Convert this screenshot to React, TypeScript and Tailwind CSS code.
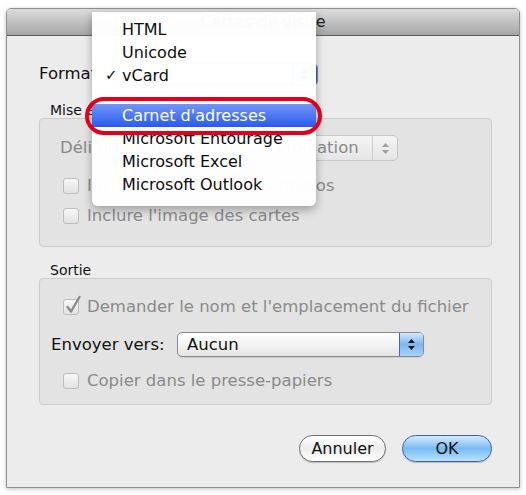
import React from "react";

function Arrows({ color = "#111" }: { color?: string }) {
  return (
    <svg width="7" height="11" viewBox="0 0 7 11" fill={color}>
      <path d="M3.5 0 L7 4 L0 4 Z" />
      <path d="M0 7 L7 7 L3.5 11 Z" />
    </svg>
  );
}

function CheckBox({ checked = false }: { checked?: boolean }) {
  return (
    <div className="relative w-[16px] h-[16px] shrink-0 rounded-[3px] border border-[#bdbdbd] bg-gradient-to-b from-[#f7f7f7] to-[#e2e2e2]">
      {checked && (
        <svg
          className="absolute left-[1px] top-[-5px]"
          width="17"
          height="20"
          viewBox="0 0 17 20"
          fill="none"
          stroke="#8a8a8a"
          strokeWidth="2.4"
          strokeLinecap="round"
          strokeLinejoin="round"
        >
          <path d="M2.5 12 L6 16.5 L14.5 2" />
        </svg>
      )}
    </div>
  );
}

export default function App() {
  return (
    <div className="relative w-[526px] h-[495px] bg-white overflow-hidden pt-[8px] pl-[6px] font-['DejaVu_Sans',sans-serif] text-[#111]">
      {/* Window */}
      <div className="w-[514px] h-[480px] flex flex-col border border-[#909090] rounded-t-[5px] shadow-[0_1px_4px_rgba(0,0,0,0.25)] overflow-hidden">
        {/* Title bar */}
        <div className="h-[27px] shrink-0 flex items-center justify-center border-b border-[#5c5c5c] bg-gradient-to-b from-[#dcdcdc] to-[#a6a6a6]">
          <span className="text-[16px] leading-[20px] text-[#222]">Cartes de visite</span>
        </div>

        {/* Body */}
        <div className="flex-1 flex flex-col bg-[#ececec] pl-[32px] pr-[27px]">
          {/* Format row */}
          <div className="mt-[26px] h-[24px] flex items-center">
            <span className="w-[75px] text-[16.5px] leading-[20px]">Format :</span>
            <div className="w-[204px] h-[23px] flex rounded-[5px] border border-[#8a8a8a] bg-gradient-to-b from-white to-[#e8e8e8] overflow-hidden">
              <div className="flex-1 pl-[10px] text-[16px] leading-[21px]">vCard</div>
              <div className="w-[25px] flex items-center justify-center border-l border-r-2 border-[#3e5fa6] bg-gradient-to-b from-[#cfe4fb] via-[#7fb8f1] to-[#9ccbf7]">
                <Arrows />
              </div>
            </div>
          </div>

          {/* Mise en page */}
          <div className="mt-[16px] h-[16px] pl-[11px] text-[14px] leading-[16px]">Mise en page</div>
          <div className="h-[129px] shrink-0 rounded-[4px] border border-[#cdcdcd] bg-[#e3e3e3] pt-[16px] pl-[20px]">
            <div className="h-[26px] flex items-center">
              <span className="w-[204px] text-[16.5px] leading-[20px] text-[#8a8a8a]">Délimiteur de champ :</span>
              <div className="w-[134px] h-[26px] flex rounded-[5px] border border-[#c6c6c6] bg-gradient-to-b from-[#f4f4f4] to-[#e6e6e6] overflow-hidden">
                <div className="flex-1 pl-[9px] text-[16.5px] leading-[24px] text-[#8a8a8a]">Tabulation</div>
                <div className="w-[25px] flex items-center justify-center border-l border-[#cccccc]">
                  <Arrows color="#a0a0a0" />
                </div>
              </div>
            </div>
            <div className="mt-[15px] h-[20px] ml-[3px] flex items-center gap-[8px]">
              <CheckBox />
              <span className="text-[16.5px] leading-[20px] text-[#8a8a8a]">Inclure les notes et les photos</span>
            </div>
            <div className="mt-[10px] h-[20px] ml-[3px] flex items-center gap-[8px]">
              <CheckBox />
              <span className="text-[16.5px] leading-[20px] text-[#8a8a8a]">Inclure l'image des cartes</span>
            </div>
          </div>

          {/* Sortie */}
          <div className="mt-[15px] h-[16px] pl-[11px] text-[14px] leading-[16px]">Sortie</div>
          <div className="h-[127px] shrink-0 rounded-[4px] border border-[#cdcdcd] bg-[#e3e3e3] pt-[18px] pl-[11px]">
            <div className="h-[20px] ml-[12px] flex items-center gap-[8px]">
              <CheckBox checked />
              <span className="text-[16.5px] leading-[20px] text-[#8a8a8a]">
                Demander le nom et l'emplacement du fichier
              </span>
            </div>
            <div className="mt-[15px] h-[25px] flex items-center">
              <span className="w-[126px] text-[16.5px] leading-[20px]">Envoyer vers:</span>
              <div className="w-[247px] h-[25px] flex rounded-[5px] border border-[#8a8a8a] bg-gradient-to-b from-white via-[#f4f4f4] to-[#e4e4e4] overflow-hidden shadow-[0_1px_1px_rgba(0,0,0,0.1)]">
                <div className="flex-1 pl-[9px] text-[16.5px] leading-[23px]">Aucun</div>
                <div className="w-[24px] flex items-center justify-center border-l border-[#4a68a8] bg-gradient-to-b from-[#d3e7fc] via-[#7cb7f1] to-[#a6d2f8]">
                  <Arrows />
                </div>
              </div>
            </div>
            <div className="mt-[14px] h-[20px] ml-[12px] flex items-center gap-[8px]">
              <CheckBox />
              <span className="text-[16.5px] leading-[20px] text-[#8a8a8a]">Copier dans le presse-papiers</span>
            </div>
          </div>

          {/* Buttons */}
          <div className="mt-[30px] h-[27px] flex justify-end gap-[16px]">
            <button className="w-[87px] h-[27px] rounded-full border border-[#6e6e6e] bg-gradient-to-b from-white via-[#ececec] to-white text-[16px] leading-[25px] text-[#111] shadow-[0_1px_1px_rgba(0,0,0,0.2)]">
              Annuler
            </button>
            <button className="w-[90px] h-[27px] rounded-full border border-[#40609f] bg-gradient-to-b from-[#d6eafd] via-[#78bbf4] to-[#b9e0fc] text-[16px] leading-[25px] text-[#111] shadow-[0_1px_1px_rgba(0,0,0,0.2)]">
              OK
            </button>
          </div>
        </div>
      </div>

      {/* Popup menu overlay */}
      <div className="absolute left-[92px] top-[12px] w-[224px] h-[194px] bg-white/[0.975] rounded-b-[6px] shadow-[0_4px_10px_rgba(0,0,0,0.3)] pt-[6px] text-[16px] text-[#0d0d0d]">
        <div className="h-[23px] flex items-center"><span className="w-[30px]" /><span className="leading-[23px]">HTML</span></div>
        <div className="h-[23px] flex items-center"><span className="w-[30px]" /><span className="leading-[23px]">Unicode</span></div>
        <div className="h-[23px] flex items-center">
          <span className="w-[30px] pl-[13px] text-[15px] leading-[23px]">✓</span>
          <span className="leading-[23px]">vCard</span>
        </div>
        <div className="h-[17px]" />
        <div className="h-[23px] flex items-center bg-gradient-to-b from-[#7395f8] to-[#2a58ef] text-white">
          <span className="w-[30px]" />
          <span className="leading-[23px]">Carnet d'adresses</span>
        </div>
        <div className="h-[23px] flex items-center"><span className="w-[30px]" /><span className="leading-[23px]">Microsoft Entourage</span></div>
        <div className="h-[23px] flex items-center"><span className="w-[30px]" /><span className="leading-[23px]">Microsoft Excel</span></div>
        <div className="h-[23px] flex items-center"><span className="w-[30px]" /><span className="leading-[23px]">Microsoft Outlook</span></div>
      </div>

      {/* Red highlight ring */}
      <div className="absolute left-[85px] top-[97px] w-[237px] h-[38px] rounded-full border-[4px] border-[#e3001b]" />
    </div>
  );
}
